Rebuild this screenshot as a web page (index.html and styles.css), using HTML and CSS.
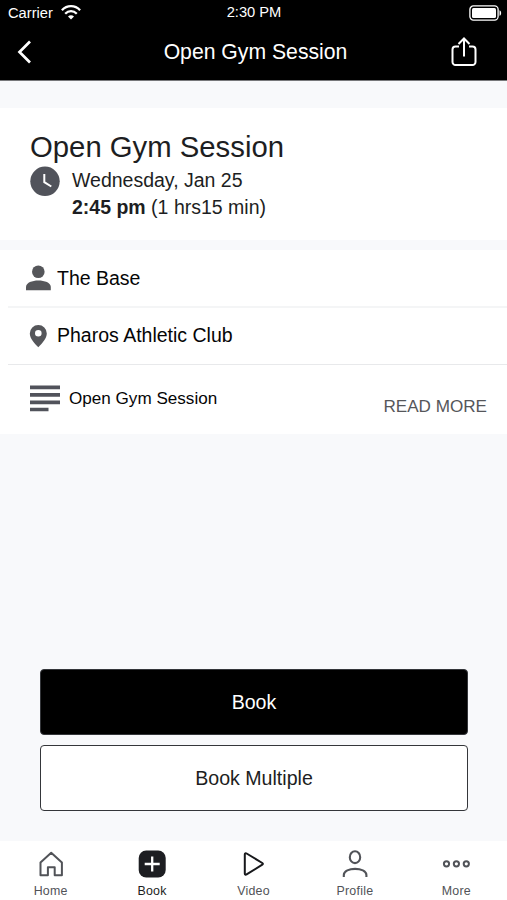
FILE: index.html
```html
<!DOCTYPE html>
<html lang="en">
<head>
<meta charset="utf-8">
<title>Open Gym Session</title>
<link rel="stylesheet" href="styles.css">
</head>
<body>
<div class="app">
  <header class="top">
    <div class="status">
      <span class="carrier">Carrier
        <svg class="wifi" width="20" height="15" viewBox="0 0 20 15" fill="none" stroke="#fff" stroke-width="2.3"><path d="M.9 5.2C6-.2 14-.2 19.1 5.2M4.2 8.800c3.400-3.500 8.200-3.500 11.600 0"/><path d="M10 14.500 7 11.500c1.700-1.600 4.300-1.600 6 0z" fill="#fff" stroke="none"/></svg>
      </span>
      <span class="time">2:30 PM</span>
      <svg class="battery" width="33" height="16" viewBox="0 0 33 16"><rect x=".9" y=".9" width="28.200" height="14.200" rx="3.500" fill="none" stroke="#fff" stroke-width="1.300"/><rect x="3" y="3" width="24" height="10" rx="1.500" fill="#fff"/><path d="M30.500 5.200c2.200.8 2.200 4.800 0 5.600z" fill="#fff"/></svg>
    </div>
    <div class="navbar">
      <svg class="back" width="16" height="24" viewBox="0 0 16 24" fill="none" stroke="#fff" stroke-width="2.700"><path d="M14 1.500 3.500 12 14 22.500"/></svg>
      <h1 class="heading">Open Gym Session</h1>
      <svg class="share" width="26" height="31" viewBox="0 0 26 31" fill="none" stroke="#fff" stroke-width="2"><path d="M8 9.500H4.500A3 3 0 0 0 1.500 12.500v12.500a3 3 0 0 0 3 3h17a3 3 0 0 0 3-3V12.500a3 3 0 0 0-3-3H18M13 19.500V1.500M7.500 7 13 1.500l5.500 5.500"/></svg>
    </div>
  </header>

  <section class="summary">
    <h2 class="title">Open Gym Session</h2>
    <div class="when">
      <svg width="30" height="30" viewBox="0 0 30 30"><circle cx="15" cy="15.300" r="14.700" fill="#51535b"/><path d="M14.300 8v8.200l7 4.300" fill="none" stroke="#fff" stroke-width="2"/></svg>
      <div class="when-text">
        <div>Wednesday, Jan 25</div>
        <div><b>2:45 pm</b> (1 hrs15 min)</div>
      </div>
    </div>
  </section>

  <section class="details">
    <div class="row">
      <svg width="26" height="26" viewBox="0 0 26 26" fill="#55565a"><circle cx="13.300" cy="6.800" r="6.300"/><path d="M1 25.200V22c0-8.600 24.800-8.600 24.800 0v3.200z"/></svg>
      <span>The Base</span>
    </div>
    <div class="row place">
      <svg width="26" height="24" viewBox="0 0 26 24"><path d="M13.300 23.300C9.500 19.400 4.800 14.500 4.800 9.500a8.500 8.500 0 0 1 17 0c0 5-4.700 9.900-8.500 13.800zM13.300 6a3.300 3.300 0 1 0 0 6.600 3.300 3.300 0 0 0 0-6.600z" fill="#55565a" fill-rule="evenodd"/></svg>
      <span>Pharos Athletic Club</span>
    </div>
    <div class="row about">
      <svg width="30" height="27" viewBox="0 0 30 27" fill="#51535b"><path d="M0 .5h30v3.800H0zM0 8h30v3.800H0zM0 15.500h30v3.800H0zM0 22.800h18.500v3.500H0z"/></svg>
      <span>Open Gym Session</span>
      <span class="more">READ MORE</span>
    </div>
  </section>

  <main class="actions">
    <button class="btn primary">Book</button>
    <button class="btn">Book Multiple</button>
  </main>

  <nav class="tabs">
    <div class="tab">
      <svg width="28" height="28" viewBox="0 0 28 28" fill="none" stroke="#515358" stroke-width="2" stroke-linejoin="round"><path d="M3.500 12.500 14.200 2.800l10.700 9.700v12.800h-7.200v-8h-6.800v8H3.500z"/></svg>
      <span>Home</span>
    </div>
    <div class="tab active">
      <svg width="28" height="28" viewBox="0 0 28 28"><rect x=".7" y=".5" width="27" height="27" rx="7.500" fill="#1d1e22"/><path d="M14.200 6.500v15M6.700 14h15" stroke="#fff" stroke-width="2.300"/></svg>
      <span>Book</span>
    </div>
    <div class="tab">
      <svg width="28" height="28" viewBox="0 0 28 28" fill="none" stroke="#17181b" stroke-width="2" stroke-linejoin="round"><path d="M5.800 4.500c0-1.200.8-1.600 1.800-1L23.300 13c.8.5.8 1.200 0 1.700L7.600 24.400c-1 .6-1.800.2-1.800-1z"/></svg>
      <span>Video</span>
    </div>
    <div class="tab">
      <svg width="28" height="28" viewBox="0 0 28 28" fill="none" stroke="#515358" stroke-width="2.100"><ellipse cx="14" cy="7.200" rx="5.200" ry="5.900"/><path d="M2.800 27v-2c0-8.200 22.600-8.200 22.600 0v2"/></svg>
      <span>Profile</span>
    </div>
    <div class="tab">
      <svg width="28" height="28" viewBox="0 0 28 28" fill="none" stroke="#515358" stroke-width="2"><circle cx="4.500" cy="13.800" r="2.600"/><circle cx="14.400" cy="13.800" r="2.600"/><circle cx="24.300" cy="13.800" r="2.600"/></svg>
      <span>More</span>
    </div>
  </nav>
</div>
</body>
</html>
```

FILE: styles.css
```css
* { box-sizing: border-box; }
body {
  margin: 0;
  font-family: "Liberation Sans", Arial, sans-serif;
  color: #1d1e22;
  background: #f8f9fb;
}
svg { display: block; flex: none; }
h1, h2 { margin: 0; font-weight: 400; }
.app { display: flex; flex-direction: column; height: 900px; white-space: nowrap; }

.top { height: 81px; background: #000; color: #fff; border-bottom: 1px solid #77787a; }
.status {
  display: grid;
  grid-template-columns: 1fr auto 1fr;
  align-items: center;
  height: 25px;
  padding: 0 5px 0 8px;
  font-size: 14.7px;
}
.carrier { display: flex; align-items: center; gap: 8px; }
.time { margin-left: -2px; padding-bottom: 1px; }
.battery { justify-self: end; }
.navbar {
  display: grid;
  grid-template-columns: 1fr auto 1fr;
  align-items: center;
  height: 54px;
  padding: 0 30px 0 16px;
}
.heading { font-size: 21.2px; padding-left: 18px; }
.share { justify-self: end; }

.summary { height: 132px; margin-top: 27px; padding: 22px 30px 0; background: #fff; }
.title { font-size: 29.3px; line-height: 34px; }
.when { display: flex; gap: 12px; padding-top: 2px; font-size: 19.5px; line-height: 27px; }
.when-text { margin-top: 1px; }

.details { margin-top: 10px; padding-left: 8px; height: 184px; background: #fff; color: #050506; }
.row {
  display: flex;
  align-items: center;
  gap: 6px;
  height: 58px;
  padding-left: 17px;
  border-bottom: 2px solid #f4f5f6;
  font-size: 19.5px;
}
.place { height: 57px; padding-bottom: 1px; border-bottom: 1px solid #e8e9eb; }
.about { height: 69px; border: 0; gap: 9px; padding: 0 20px 2px 22px; font-size: 17.1px; }
.more { margin-left: auto; padding-top: 16px; color: #55565a; font-size: 17.1px; }

.actions {
  flex: 1;
  display: flex;
  flex-direction: column;
  justify-content: flex-end;
  gap: 10px;
  padding: 0 39px 30px 40px;
}
.btn {
  height: 66px;
  border: 1.5px solid #34363a;
  border-radius: 4px;
  background: #fff;
  color: #1d1e22;
  font: 19.6px "Liberation Sans", Arial, sans-serif;
}
.primary { background: #000; color: #fff; }

.tabs {
  display: grid;
  grid-template-columns: repeat(5, 1fr);
  height: 59px;
  padding-top: 9px;
  background: #fff;
}
.tab {
  display: flex;
  flex-direction: column;
  align-items: center;
  gap: 5px;
  color: #515358;
  font-size: 12.4px;
  line-height: 16px;
  letter-spacing: .25px;
}
.active { color: #1d1e22; }
```
